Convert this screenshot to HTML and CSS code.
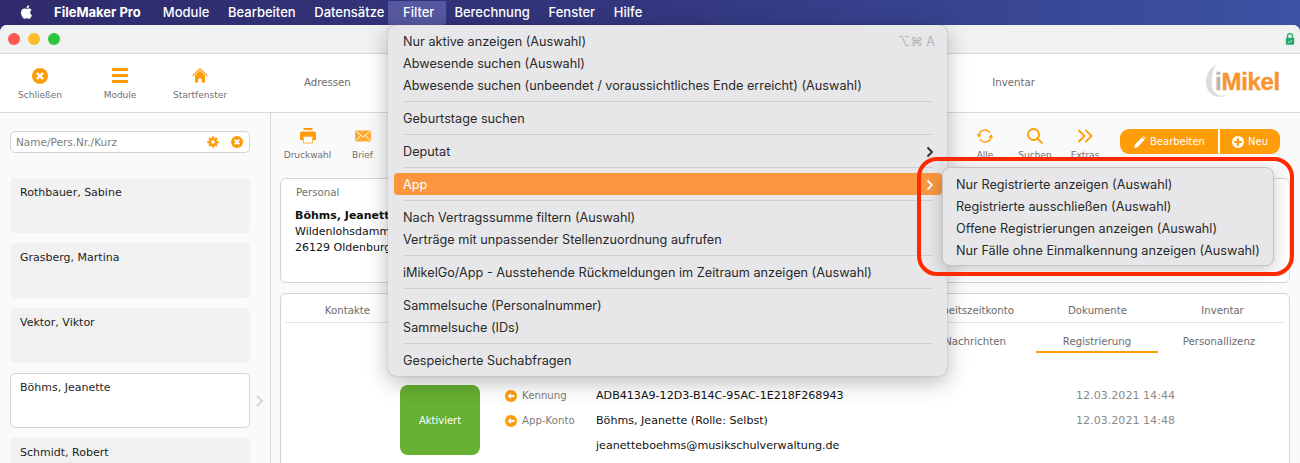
FILE: index.html
```html
<!DOCTYPE html>
<html lang="de">
<head>
<meta charset="utf-8">
<title>FileMaker Pro – iMikel</title>
<link rel="stylesheet" href="styles.css">
</head>
<body>
<div class="screen">
  <header class="menubar">
    <svg class="apple" viewBox="0 0 16 16"><path d="M11.18 8.47c-.02-1.7 1.39-2.52 1.45-2.56-.79-1.16-2.02-1.32-2.46-1.34-1.05-.11-2.05.62-2.58.62-.53 0-1.36-.6-2.23-.59-1.15.02-2.21.67-2.8 1.7-1.19 2.07-.3 5.13.86 6.81.57.82 1.24 1.74 2.13 1.71.85-.03 1.18-.55 2.21-.55 1.03 0 1.32.55 2.23.53.92-.02 1.5-.84 2.06-1.66.65-.95.92-1.87.93-1.92-.02-.01-1.78-.68-1.8-2.75zM9.49 3.44c.47-.57.79-1.36.7-2.15-.68.03-1.5.45-1.99 1.02-.44.5-.82 1.31-.72 2.08.76.06 1.54-.38 2.01-.95z"/></svg>
    <span class="mb-item mb-app">FileMaker Pro</span>
    <span class="mb-item">Module</span>
    <span class="mb-item">Bearbeiten</span>
    <span class="mb-item">Datensätze</span>
    <span class="mb-item mb-active">Filter</span>
    <span class="mb-item">Berechnung</span>
    <span class="mb-item">Fenster</span>
    <span class="mb-item">Hilfe</span>
  </header>

  <div class="window">
    <div class="titlebar">
      <span class="light light-red"></span>
      <span class="light light-yellow"></span>
      <span class="light light-green"></span>
      <svg class="lock" viewBox="0 0 12 16"><path class="lock-shackle" d="M3 7V4.500a3 3 0 0 1 6 0V7"/><rect class="lock-body" x="1" y="6.500" width="10" height="8.500" rx="1"/><path class="lock-check" d="M3.800 10.800l1.600 1.600 3-3"/></svg>
    </div>

    <div class="topbar">
      <div class="tool-group">
        <div class="tool tool-wide">
          <svg class="icon" viewBox="0 0 16 16"><circle class="fill" cx="8" cy="8" r="8"/><path class="white-stroke" d="M5 5l6 6M11 5l-6 6"/></svg>
          <span>Schließen</span>
        </div>
        <div class="tool tool-wide">
          <svg class="icon" viewBox="0 0 16 16"><path class="fill" d="M0 0h16v3H0zM0 6h16v3H0zM0 12h16v3H0z"/></svg>
          <span>Module</span>
        </div>
        <div class="tool tool-wide">
          <svg class="icon" viewBox="0 0 16 16"><path class="fill" d="M8 2.500l5 4.700v7.300H9.700V10.500H6.300v4H3V7.200z"/><path class="thin-stroke" d="M.5 8L8 .8 15.500 8"/></svg>
          <span>Startfenster</span>
        </div>
      </div>
      <nav class="top-nav">
        <span>Adressen</span>
        <span>Inventar</span>
      </nav>
      <div class="logo">
        <svg class="logo-swoosh" viewBox="0 0 24 36"><path d="M12 1C5 5 1 12 1 20c0 8 6 15 15 15 3 0 5-.6 7-2-2 .6-3.500.8-5 .8-7 0-11-6-11-13C7 13 8 7 12 1z"/></svg>
        <span class="logo-i">i</span>Mikel
      </div>
    </div>

    <div class="body">
      <aside class="sidebar">
        <div class="search">
          <span class="search-text">Name/Pers.Nr./Kurz</span>
          <svg class="search-icon" viewBox="0 0 16 16"><path class="gear-teeth" d="M8 .5v15M.5 8h15M2.700 2.700l10.600 10.600M13.300 2.700L2.700 13.300"/><circle class="gear" cx="8" cy="8" r="5.500"/><circle class="white-fill" cx="8" cy="8" r="2.400"/></svg>
          <svg class="search-icon" viewBox="0 0 16 16"><circle class="fill" cx="8" cy="8" r="8"/><path class="white-stroke" d="M5 5l6 6M11 5l-6 6"/></svg>
        </div>
        <div class="person-list">
          <div class="person">Rothbauer, Sabine</div>
          <div class="person">Grasberg, Martina</div>
          <div class="person">Vektor, Viktor</div>
          <div class="person person-selected">Böhms, Jeanette
            <svg class="person-chevron" viewBox="0 0 8 12"><path d="M1 1l5 5-5 5"/></svg>
          </div>
          <div class="person">Schmidt, Robert</div>
        </div>
      </aside>

      <main class="main">
        <div class="main-tools">
          <div class="tool tool-small">
            <svg class="icon" viewBox="0 0 16 16"><path class="fill" d="M3.500 0h9v2h-9z"/><path class="fill" d="M1.500 3.500h13a1.500 1.500 0 0 1 1.500 1.500v7h-3V8H3v4H0V5a1.500 1.500 0 0 1 1.500-1.500z"/><path class="fill-soft" d="M3.500 8.500h9V15h-9z"/></svg>
            <span>Druckwahl</span>
          </div>
          <div class="tool tool-small">
            <svg class="icon" viewBox="0 0 16 16"><path class="fill-light" d="M0 2.500h16v11H0z"/><path class="white-thin" d="M.5 3l7.500 6 7.500-6M.5 13l5.500-6M15.500 13l-5.500-6"/></svg>
            <span>Brief</span>
          </div>
          <div class="spacer"></div>
          <div class="tool tool-small">
            <svg class="icon" viewBox="0 0 16 16"><path class="refresh-line" d="M2 6.500A6 6 0 0 1 13 5M14 9.500A6 6 0 0 1 3 11"/><path class="fill" d="M0 6l4.500.5L1.500 10zM16 10l-4.500-.5L14.500 6z"/></svg>
            <span>Alle</span>
          </div>
          <div class="tool tool-small">
            <svg class="icon" viewBox="0 0 16 16"><circle class="orange-line" cx="6.500" cy="6.500" r="5.500"/><path class="orange-line" d="M10.500 10.500L15.500 15.500"/></svg>
            <span>Suchen</span>
          </div>
          <div class="tool tool-small">
            <svg class="icon" viewBox="0 0 16 16"><path class="orange-line" d="M1.500 2l6 6-6 6M8.500 2l6 6-6 6"/></svg>
            <span>Extras</span>
          </div>
          <div class="actions">
            <div class="btn btn-left">
              <svg class="btn-icon" viewBox="0 0 14 14"><path d="M0 14l1-4L9.500 1.500l3 3L4 13zM10.300.700l.7-.7 3 3-.7.700z"/></svg>
              Bearbeiten
            </div>
            <div class="btn btn-right">
              <svg class="btn-icon btn-plus" viewBox="0 0 14 14"><circle cx="7" cy="7" r="7"/><path class="plus-cut" d="M7 2.500v9M2.500 7h9"/></svg>
              Neu
            </div>
          </div>
        </div>

        <section class="card card-personal">
          <div class="card-title">Personal</div>
          <div class="address">
            <strong>Böhms, Jeanette</strong><br>
            Wildenlohsdamm<br>
            26129 Oldenburg
          </div>
        </section>

        <section class="card card-detail">
          <div class="tabs">
            <span>Kontakte</span><span></span><span></span><span></span><span></span>
            <span>Arbeitszeitkonto</span><span>Dokumente</span><span>Inventar</span>
          </div>
          <div class="subtabs">
            <span>Nachrichten</span>
            <span class="subtab-active">Registrierung</span>
            <span>Personallizenz</span>
          </div>
          <div class="reg">
            <div class="status">Aktiviert</div>
            <div class="reg-grid">
              <div class="reg-label">
                <svg class="back" viewBox="0 0 12 12"><circle class="fill" cx="6" cy="6" r="6"/><path class="white-fill" d="M2.500 6L6 3v2h3.500v2H6v2z"/></svg>
                Kennung
              </div>
              <div class="reg-value">ADB413A9-12D3-B14C-95AC-1E218F268943</div>
              <div class="reg-date">12.03.2021 14:44</div>
              <div class="reg-label">
                <svg class="back" viewBox="0 0 12 12"><circle class="fill" cx="6" cy="6" r="6"/><path class="white-fill" d="M2.500 6L6 3v2h3.500v2H6v2z"/></svg>
                App-Konto
              </div>
              <div class="reg-value">Böhms, Jeanette (Rolle: Selbst)</div>
              <div class="reg-date">12.03.2021 14:48</div>
              <div class="reg-label"></div>
              <div class="reg-value">jeanetteboehms@musikschulverwaltung.de</div>
              <div class="reg-date"></div>
            </div>
          </div>
        </section>
      </main>
    </div>
  </div>

  <div class="menu">
    <div class="mi">Nur aktive anzeigen (Auswahl)<span class="shortcut">⌥⌘ A</span></div>
    <div class="mi">Abwesende suchen (Auswahl)</div>
    <div class="mi">Abwesende suchen (unbeendet / voraussichtliches Ende erreicht) (Auswahl)</div>
    <div class="sep"></div>
    <div class="mi">Geburtstage suchen</div>
    <div class="sep"></div>
    <div class="mi">Deputat<svg class="mi-chevron" viewBox="0 0 8 12"><path d="M1.500 1.500L6 6l-4.500 4.500"/></svg></div>
    <div class="sep"></div>
    <div class="mi mi-active">App<svg class="mi-chevron" viewBox="0 0 8 12"><path d="M1.500 1.500L6 6l-4.500 4.500"/></svg></div>
    <div class="sep"></div>
    <div class="mi">Nach Vertragssumme filtern (Auswahl)</div>
    <div class="mi">Verträge mit unpassender Stellenzuordnung aufrufen</div>
    <div class="sep"></div>
    <div class="mi">iMikelGo/App - Ausstehende Rückmeldungen im Zeitraum anzeigen (Auswahl)</div>
    <div class="sep"></div>
    <div class="mi">Sammelsuche (Personalnummer)</div>
    <div class="mi">Sammelsuche (IDs)</div>
    <div class="sep"></div>
    <div class="mi">Gespeicherte Suchabfragen</div>
  </div>

  <div class="submenu">
    <div class="mi">Nur Registrierte anzeigen (Auswahl)</div>
    <div class="mi">Registrierte ausschließen (Auswahl)</div>
    <div class="mi">Offene Registrierungen anzeigen (Auswahl)</div>
    <div class="mi">Nur Fälle ohne Einmalkennung anzeigen (Auswahl)</div>
  </div>

  <div class="annotation"></div>
</div>
</body>
</html>
```
FILE: styles.css
```css
* { box-sizing: border-box; }
html, body { margin: 0; padding: 0; }
body { width: 1300px; height: 463px; overflow: hidden; font-family: "DejaVu Sans", sans-serif; }
svg { display: block; }

.screen { position: relative; width: 1300px; height: 463px; overflow: hidden; display: flex; flex-direction: column; background: linear-gradient(90deg, #2f2b6c 0%, #33377f 50%, #3c52a3 100%); }

/* macOS menu bar */
.menubar { height: 25px; flex: none; display: flex; align-items: center; padding-left: 19px; color: #fff; font: 500 13px "Inter", sans-serif; }
.apple { width: 16px; height: 16px; fill: #fff; margin-right: 19px; margin-top: -2px; }
.mb-item { padding: 0 18.700px 1px 0; white-space: nowrap; }
.mb-app { font-weight: 700; padding-right: 22px; }
.mb-active { background: #5558a0; height: 24px; line-height: 23px; padding: 0 12px 0 15px; margin-left: -15px; margin-right: 8px; border-radius: 0 0 3px 3px; }

/* window */
.window { flex: 1; min-height: 0; background: #fafafa; border-radius: 7px 7px 0 0; display: flex; flex-direction: column; overflow: hidden; }
.titlebar { height: 29px; flex: none; background: #f0f1f1; border-bottom: 1px solid #d5d5d5; display: flex; align-items: center; gap: 8px; padding: 0 5px 1px 8px; }
.light { width: 12px; height: 12px; border-radius: 50%; }
.light-red { background: #fc5753; }
.light-yellow { background: #fdbc2e; }
.light-green { background: #2bc640; }
.lock { width: 10px; height: 14px; margin-left: auto; }
.lock-shackle { fill: none; stroke: #25a66b; stroke-width: 1.600; }
.lock-body { fill: #25a66b; }
.lock-check { fill: none; stroke: #fff; stroke-width: 1; }

.topbar { height: 59px; flex: none; background: #fff; border-bottom: 1px solid #d8d8d8; display: flex; align-items: center; }
.tool-group { display: flex; }
.tool { display: flex; flex-direction: column; align-items: center; color: #707070; font-size: 9px; white-space: nowrap; }
.tool-wide { width: 80px; gap: 6px; padding-top: 1px; }
.tool-small { width: 50px; gap: 6px; }
.icon { width: 16px; height: 16px; }
.fill { fill: #ff9c0a; }
.fill-light { fill: #ffaa33; }
.fill-soft { fill: #fff; stroke: #ffb347; stroke-width: 1; }
.white-fill { fill: #fff; }
.white-stroke { stroke: #fff; stroke-width: 2.400; fill: none; }
.white-thin { stroke: #fff; stroke-width: .9; fill: none; }
.thin-stroke { stroke: #ff9c0a; stroke-width: 1.100; fill: none; }
.orange-line { stroke: #ff9c0a; stroke-width: 1.800; fill: none; }
.refresh-line { stroke: #ff9c0a; stroke-width: 1.300; fill: none; }

.top-nav { margin-left: 64px; width: 731px; display: flex; justify-content: space-between; color: #6b6b6b; font-size: 10.200px; padding-bottom: 2px; }
.logo { position: relative; margin-left: auto; margin-right: 20px; margin-top: -3px; font: 700 24px "Liberation Sans", sans-serif; letter-spacing: -.3px; color: #f9932d; -webkit-text-stroke: .4px #f9932d; }
.logo-i { color: #b5b5b5; -webkit-text-stroke: .4px #b5b5b5; }
.logo-swoosh { position: absolute; left: -10px; top: -5px; width: 23px; height: 35px; fill: #dcdcdc; }

.body { flex: 1; min-height: 0; display: flex; }

/* sidebar */
.sidebar { width: 271px; flex: none; border-right: 1px solid #d8d8d8; padding: 18px 20px 0 10px; display: flex; flex-direction: column; gap: 25px; }
.search { height: 22px; flex: none; background: #fff; border: 1px solid #d4d4d4; border-radius: 5px; display: flex; align-items: center; gap: 12px; padding: 0 6px 0 5px; font-size: 10.500px; color: #7d7d7d; }
.search-text { margin-right: auto; }
.search-icon { width: 12px; height: 12px; }
.gear { fill: #ff9c0a; }
.gear-teeth { stroke: #ff9c0a; stroke-width: 3; }
.person-list { display: flex; flex-direction: column; gap: 10px; }
.person { position: relative; height: 55px; flex: none; background: #f1f1f1; border-radius: 5px; padding: 8px 10px; font-size: 11px; line-height: 13px; color: #1e1e1e; }
.person-selected { background: #fff; border: 1px solid #d4d4d4; padding: 7px 9px; }
.person-chevron { position: absolute; left: 245px; top: 21px; width: 8px; height: 12px; fill: none; stroke: #d4d4d4; stroke-width: 2; }

/* main */
.main { flex: 1; min-width: 0; padding: 8px 10px 0 9px; display: flex; flex-direction: column; }
.main-tools { height: 57px; flex: none; display: flex; align-items: flex-start; padding-top: 7px; }
.main-tools .tool-small:nth-child(1) { width: 55px; }
.main-tools .tool-small:nth-child(2) { width: 55px; }
.spacer { flex: 1; }
.actions { display: flex; gap: 2px; margin: 0 10px 0 10px; padding-top: 1px; }
.btn { height: 25px; background: #ff9c0a; color: #fff; font-size: 10px; display: flex; align-items: center; gap: 4px; }
.btn-left { width: 98px; border-radius: 9px 0 0 9px; padding-left: 14px; }
.btn-right { width: 60px; border-radius: 0 9px 9px 0; padding-left: 12px; }
.btn-icon { width: 12px; height: 12px; fill: #fff; }
.plus-cut { stroke: #ff9c0a; stroke-width: 2.600; }

.card { background: #fff; border: 1px solid #d4d4d4; border-radius: 6px; flex: none; }
.card-personal { height: 105px; padding: 8px 14px; }
.card-title { font-size: 10.200px; line-height: 12px; color: #707070; padding-left: 1px; }
.address { margin-top: 9px; font-size: 11px; line-height: 16px; color: #111; }
.card-detail { margin-top: 10px; height: 200px; padding: 0 4px; }
.tabs { height: 29px; display: grid; grid-template-columns: repeat(8, 125px); border-bottom: 1px solid #e4e4e4; align-items: center; text-align: center; color: #6b6b6b; font-size: 10.200px; padding-top: 5px; }
.subtabs { display: flex; justify-content: flex-end; padding-right: 5px; }
.subtabs span { width: 122px; height: 30px; text-align: center; color: #6b6b6b; font-size: 10.200px; padding-top: 13px; line-height: 12px; border-bottom: 2px solid transparent; }
.subtabs .subtab-active { border-bottom-color: #ff9c0a; }
.reg { display: flex; margin: 32px 0 0 115px; }
.status { width: 80px; height: 70px; flex: none; background: #66b032; border-radius: 8px; color: #fff; font-size: 10px; display: flex; align-items: center; justify-content: center; }
.reg-grid { margin-left: 25px; display: grid; grid-template-columns: 91px 480px 120px; grid-auto-rows: 25px; align-items: center; margin-top: -2px; }
.reg-label { display: flex; align-items: center; gap: 5px; color: #7b7b7b; font-size: 10.200px; }
.back { width: 12px; height: 12px; }
.reg-value { font-size: 11.100px; color: #111; white-space: nowrap; }
.reg-date { font-size: 11.100px; color: #8a8a8a; white-space: nowrap; }

/* popups */
.menu, .submenu { position: absolute; background: #e7e7e9; font: 400 12.700px "Inter", sans-serif; color: #2a2a2a; }
.menu { left: 388px; top: 25px; width: 559px; padding: 5px 0; border-radius: 8px; box-shadow: 0 6px 22px rgba(0,0,0,.28), 0 0 1px rgba(0,0,0,.4); }
.mi { height: 22px; line-height: 22px; padding: 2px 15px 0; white-space: nowrap; display: flex; align-items: center; }
.menu .mi { margin: 0 5px 0 6px; padding: 2px 9px 0; border-radius: 4px; }
.mi-active { background: #f9963f; color: #fff; }
.mi-chevron { width: 8px; height: 12px; margin-left: auto; fill: none; stroke: #2a2a2a; stroke-width: 1.800; margin-right: -1px; }
.mi-active .mi-chevron { stroke: #fff; }
.shortcut { margin-left: auto; color: #b4b4b6; font-size: 12.500px; margin-right: -2px; }
.sep { height: 1px; margin: 5px 14px 5px 15px; background: #cfcfd1; }
.submenu { left: 942px; top: 167px; width: 332px; height: 99px; padding: 5px 0 0; border-radius: 8px; border: 1px solid #c4c4c6; box-shadow: 0 4px 16px rgba(0,0,0,.22); }
.submenu .mi { padding: 2px 13px 0; }
.annotation { position: absolute; left: 917px; top: 157px; width: 377px; height: 119px; border: 4px solid #ff2a00; border-radius: 20px; pointer-events: none; }
```
